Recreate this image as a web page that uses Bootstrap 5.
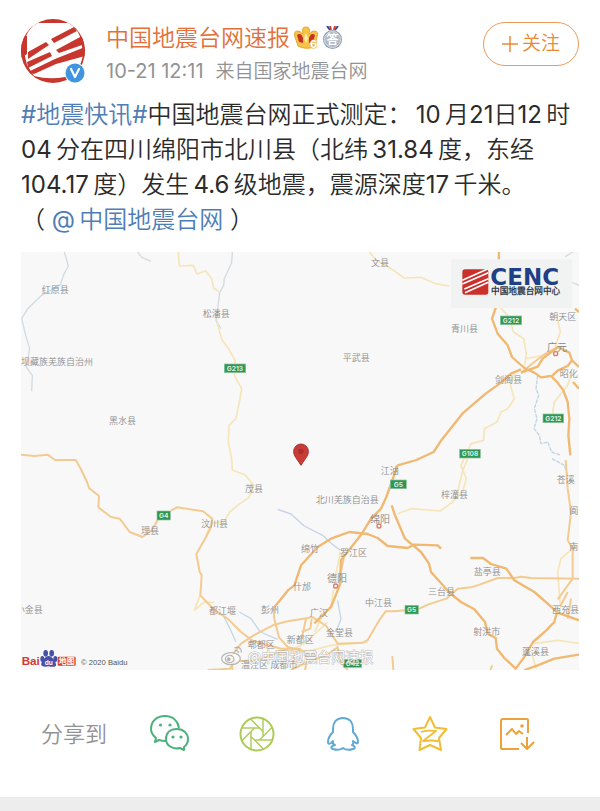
<!DOCTYPE html>
<html lang="zh-CN">
<head>
<meta charset="utf-8">
<meta name="viewport" content="width=device-width, initial-scale=1">
<title>中国地震台网速报</title>
<link href="https://cdn.jsdelivr.net/npm/bootstrap@5.3.0/dist/css/bootstrap.min.css" rel="stylesheet">
<style>
body{font-family:Inter,"Noto Sans CJK SC DemiLight","Noto Sans CJK SC",sans-serif;font-weight:400;color:#2b2b2b;background:#fff}
.post{padding:18px 21px 0}
.avatar{width:64px;height:66px}
.identity{padding:3px 0 0 21px}
.author{font-size:23px;line-height:34px;color:#e2703a}
.meta{font-size:19px;line-height:32px;color:#929292}
.meta time{font-size:20px}
.follow{width:96px;height:44px;border:1px solid #eb9a5c;border-radius:22px;background:#fff;color:#e88a35;font-size:19px;line-height:24px;margin-top:4px}
.message{font-size:24px;line-height:35px;margin:9px 0 15px}
.message a{color:#4f7db5}
.map-view{background:#f8f8f8}
.map-view svg{width:100%;height:auto}
.share{padding:40px 40px 39px 41px}
.share-label{width:86px;font-size:22px;color:#929292}
.divider{min-height:14px;background:#ededed}
.place{font-size:27px;fill:#8d8d8d;font-weight:400}
.city{font-size:30px;fill:#858585;font-weight:400}
.sign{font-size:20px;fill:#d9efdf;font-weight:700}
</style>
<script src="https://cdn.jsdelivr.net/npm/bootstrap@5.3.0/dist/js/bootstrap.bundle.min.js"></script>
</head>
<body class="d-flex flex-column min-vh-100">
<main class="post">
  <header class="d-flex align-items-start">
    <a href="#" class="flex-shrink-0 lh-1" aria-label="中国地震台网速报">
      <svg class="avatar" viewBox="0 0 64 66">
        <defs><clipPath id="face"><circle cx="32" cy="33" r="32"/></clipPath></defs>
        <g clip-path="url(#face)">
          <rect width="64" height="66" fill="#c8372d"/>
          <path d="M5 18Q9 9 16 5L48 5Q54 9 57 14L60 21 62 36Q60 54 44 59Q28 62 13 58L6 47 3 34Q6 32 6 35Z" fill="#fff"/>
          <path d="M0 16 6 18 6 36 0 40ZM30 21 53 9 56 13 33 25ZM7 34 25 24 28 27 7 41ZM35 32 61 18 64 26 38 35ZM6 44 29 34 31 38 7 50ZM7 54 34 41 64 29 64 38 35 46 13 56Z" fill="#c8372d"/>
        </g>
        <circle cx="54" cy="55" r="10.500" fill="#fff"/><circle cx="54" cy="55" r="9.500" fill="#3f95df"/>
        <path d="m50 51 4 8 4-8" fill="none" stroke="#fff" stroke-width="2.200" stroke-linecap="round" stroke-linejoin="round"/>
      </svg>
    </a>
    <div class="flex-grow-1 identity">
      <div class="d-flex align-items-center gap-1">
        <a href="#" class="author text-decoration-none text-nowrap">中国地震台网速报</a>
        <svg width="24" height="24" viewBox="0 0 24 24" role="img" aria-label="会员等级">
          <path d="M4 20 1 11Q-1 5 4 5Q7 5 8 8L9 7Q7 1 12 1T15 7L16 8Q17 5 20 5Q25 5 23 11L20 21Q12 24 4 20Z" fill="#f7c348" stroke="#e8a72e"/>
          <path d="M3 9Q7 6 9 12L9 17 5 16ZM21 9Q17 6 15 12L15 17 19 16Z" fill="#c73320"/><path d="M12 7 10 12 12 17 14 12Z" fill="#fff0a8"/>
          <text x="16" y="22" font-size="11" font-weight="700" fill="#fff" stroke="#e8a72e" stroke-width="1" paint-order="stroke">6</text>
        </svg>
        <svg width="21" height="24" viewBox="0 0 21 24" role="img" aria-label="问答勋章">
          <path d="M5 0 8 4M16 0 13 4" stroke="#2d4b91" stroke-width="2"/><path d="M8 0 9 4M13 0 12 4" stroke="#cc3d3d" stroke-width="2"/>
          <circle cx="10.500" cy="13.500" r="9.500" fill="#8f9cad"/><circle cx="10.500" cy="13.500" r="8" fill="#aeb9c7" stroke="#dde2e8"/>
          <text x="10.500" y="18" text-anchor="middle" font-size="12" font-weight="700" fill="#fff">答</text>
        </svg>
      </div>
      <div class="meta text-nowrap"><time>10-21 12:11</time><span class="ms-2 ps-1">来自国家地震台网</span></div>
    </div>
    <button type="button" class="follow flex-shrink-0 d-flex align-items-center justify-content-center p-0">
      <svg class="me-1" width="16" height="16" viewBox="0 0 16 16" aria-hidden="true"><path d="M0 8H16M8 0V16" stroke="currentColor" stroke-width="1.500"/></svg>关注
    </button>
  </header>

  <p class="message"><a href="#" class="text-decoration-none">#地震快讯#</a>中国地震台网正式测定：&thinsp;10&thinsp;月21日12&thinsp;时04&thinsp;分在四川绵阳市北川县（北纬&thinsp;31.84&thinsp;度，东经104.17&thinsp;度）发生&thinsp;4.6&thinsp;级地震，震源深度17&thinsp;千米。<br>（ <a href="#" class="text-decoration-none">@&thinsp;中国地震台网</a> ）</p>

  <figure class="map-view m-0">
    <svg class="d-block" viewBox="0 0 1674 1254" role="img" aria-label="震中位置地图">
      <g fill="none" stroke-width="4" stroke="#d3dae1" stroke-linejoin="round">
        <path d="M130 0 142 42 128 68 118 98 62 130 20 170 2 200 14 250 26 290 16 345 34 370 32 418M350 0 362 16 390 28"/>
        <path d="M634 0 632 32 610 80 608 100 596 122 590 170 585 205 600 230"/>
        <path d="M770 772 810 786 850 822 905 850 930 874 958 895" stroke="#c4d3e8"/>
        <path d="M655 1080 690 1100 718 1140 770 1162M609 1095 627 1130 645 1170M950 1045 954 1070 960 1100 945 1140" stroke="#c4d7e8"/>
        <path d="M1550 370 1545 410 1553 430 1540 470 1548 500 1539 530 1555 550 1560 575 1580 570 1592 600 1620 610M1593 620 1630 640 1640 670" stroke="#bed5e3" stroke-dasharray="12 3"/>
        <path d="M1633 14 1655 0M1650 90 1674 100"/>
      </g>
      <g fill="none" stroke="#f6e5b8" stroke-width="5" stroke-linejoin="round">
        <path d="M472 0 475 42 517 40 528 66 554 56 572 80 578 108 597 122"/>
        <path d="M588 210 602 262 624 292 642 325 640 370 662 410 655 450 645 500 624 520 622 570 632 620 634 655 672 668 698 700 684 736 650 760 626 780 610 808 572 815 554 850"/>
        <path d="M1045 0 1065 24 1110 50 1150 78 1200 76 1240 94 1285 102"/>
        <path d="M1436 165 1460 190 1478 240 1508 260 1516 305 1510 345M1480 365 1468 400 1480 440 1460 470 1440 480 1428 510 1390 530 1388 565 1350 575 1320 640 1336 680 1326 715 1295 750 1258 777 1170 770 1130 785M1340 620 1324 660 1310 720M1517 320 1555 312 1610 297"/>
        <path d="M1610 205 1618 240 1602 285M1650 370 1640 400 1600 450 1595 480 1610 510M1665 880 1620 920 1610 960 1618 1060M1537 1175 1610 1165 1674 1174M1545 1250 1532 1200"/>
        <path d="M537 1030 520 1075 550 1050 580 1052"/>
        <path d="M958 900 946 960 930 1060 900 1100 880 1140M760 1198 860 1198 930 1180 1040 1170M770 1210 850 1175 920 1110"/>
      </g>
      <g fill="none" stroke="#f3cb90" stroke-width="6" stroke-linejoin="round">
        <path d="M0 608 40 612 80 608 102 624 164 624 178 648 198 690 204 708 234 732 232 766 270 795 296 800 326 840 364 855 392 835 410 804"/>
        <path d="M450 776 468 766 546 778 574 800 568 830 548 868 526 906 536 960 542 970 538 1030 580 1074 620 1100 660 1140 694 1166 780 1190 840 1190"/>
        <path d="M634 1254 632 1210 660 1175 698 1150 760 1118 800 1108 862 1098 872 1094 916 1122 940 1160 950 1175 1026 1172 1040 1164 1074 1106 1094 1078 1120 1078 1190 1072 1220 1058 1276 1040 1310 1010 1350 1006 1376 998 1430 978 1480 978 1500 974 1530 978 1674 980"/>
        <path d="M757 1070 760 1102 774 1156 800 1185 850 1198 858 1225 852 1254M560 1254 627 1250 640 1228 710 1225 800 1190M810 1254 860 1230 920 1208 950 1185 958 1230 980 1254M842 1140 868 1130 872 1100M842 1160 855 1100"/>
        <path d="M1117 1254 1114 1212M1408 1254 1414 1240M1610 1042 1655 980 1655 890 1640 865 1650 780 1640 710 1634 624M1650 1040 1640 1100M1617 1065 1640 1020"/>
        <path d="M962 905 968 920 960 960 958 1000M1500 362 1540 330 1580 300 1605 290"/>
      </g>
      <g fill="none" stroke="#f0b870" stroke-width="7" stroke-linejoin="round">
        <path d="M758 1068 800 1016 820 1000 840 940 890 885 930 860 985 840 1040 846 1070 858 1100 882 1160 888 1180 878 1250 880 1260 890"/>
        <path d="M1022 846 960 925 956 1000 930 1065 880 1114M1022 846 1050 800 1080 770 1096 735 1112 690 1130 640 1186 624 1238 600 1260 566 1324 485 1394 425 1436 395 1470 365 1500 352M1112 760 1122 790 1152 860 1200 900 1224 935 1230 960 1275 1010 1290 1026 1320 1050 1360 1072 1392 1110 1400 1145 1424 1158 1428 1190 1450 1218 1484 1250 1510 1215 1536 1170 1575 1136 1600 1110 1608 1080 1580 1055 1540 1020 1480 985 1456 950 1410 936 1386 918 1348 918"/>
        <path d="M1434 0 1433 24M1425 165 1413 200 1430 245 1460 280 1473 315 1510 348 1540 362 1560 376 1590 372 1608 390 1627 415 1640 450 1645 500 1642 550 1648 610"/>
        <path d="M1500 362 1550 344 1565 320 1610 285 1645 302 1653 325 1640 342 1610 356 1590 375M1653 325 1674 345M1674 180 1662 170M1656 390 1674 410"/>
        <path d="M1510 1254 1550 1240 1600 1220 1674 1208M1610 1082 1674 1105"/>
      </g>
      <g class="place">
        <text x="62" y="124">红原县</text><text x="0" y="338">坝藏族羌族自治州</text><text x="264" y="516">黑水县</text><text x="545" y="196">松潘县</text><text x="1050" y="42">文县</text><text x="965" y="328">平武县</text><text x="1290" y="239">青川县</text><text x="1585" y="203">朝天区</text><text x="1422" y="394">剑阁县</text><text x="1616" y="376">昭化</text>
        <text x="672" y="719">茂县</text><text x="884" y="752">北川羌族自治县</text><text x="1079" y="667">江油</text><text x="1260" y="738">梓潼县</text><text x="540" y="826">汶川县</text><text x="360" y="847">理县</text><text x="840" y="901">绵竹</text><text x="957" y="911">罗江区</text><text x="816" y="1013">什邡</text><text x="564" y="1086">都江堰</text><text x="720" y="1084">彭州</text><text x="867" y="1092">广汉</text><text x="1032" y="1062">中江县</text><text x="797" y="1173">新都区</text><text x="915" y="1152">金堂县</text><text x="680" y="1187">郫都区</text><text x="660" y="1248">温江区 成都市</text><text x="1358" y="970">盐亭县</text><text x="1221" y="1029">三台县</text><text x="1357" y="1148">射洪市</text><text x="1593" y="1083">西充县</text><text x="1503" y="1208">蓬溪县</text><text x="1607" y="692">苍溪</text><text x="1645" y="787">阆</text><text x="1645" y="895">南</text><text x="-16" y="1082">小金县</text>
      </g>
      <g class="city"><text x="1578" y="298">广元</text><text x="1047" y="812">绵阳</text><text x="918" y="991">德阳</text></g>
      <g fill="#fff" stroke="#d97b68" stroke-width="4"><circle cx="1604" cy="305" r="6"/><circle cx="1074" cy="822" r="6"/><circle cx="944" cy="1002" r="6"/></g>
      <g fill="#2f9655" stroke="#8bc39b" stroke-width="2">
        <rect x="610" y="336" width="64" height="26"/><rect x="1438" y="192" width="64" height="26"/><rect x="1566" y="486" width="62" height="26"/><rect x="1316" y="592" width="62" height="26"/><rect x="1108" y="684" width="48" height="26"/><rect x="408" y="777" width="40" height="27"/><rect x="1152" y="1060" width="40" height="26"/><rect x="968" y="1222" width="54" height="24"/>
      </g>
      <g class="sign" text-anchor="middle"><text x="642" y="356">G213</text><text x="1470" y="212">G212</text><text x="1597" y="506">G212</text><text x="1347" y="612">G108</text><text x="1132" y="704">G5</text><text x="428" y="797">G4</text><text x="1172" y="1080">G5</text><text x="995" y="1241">G42</text></g>
      <path d="M840 640C826 618 818 612 818 598A22 22 0 0 1 862 598C862 612 854 618 840 640Z" fill="#c93b36" stroke="#a93531" stroke-width="3"/><circle cx="840" cy="598" r="8" fill="#a92d2a"/>

      <rect x="1290" y="22" width="364" height="146" rx="4" fill="#f0f3f2"/>
      <rect x="1324" y="52" width="78" height="76" rx="8" fill="#cb302b"/>
      <path d="M1324 85 1398 52M1324 96 1402 62M1330 111 1402 80M1332 122 1402 91" stroke="#fff" stroke-width="5"/>
      <text x="1408" y="98" font-family="DejaVu Sans, sans-serif" font-weight="700" font-size="69" fill="#1f3f86">CENC</text>
      <text x="1410" y="126" font-weight="700" font-size="26" fill="#303848">中国地震台网中心</text>

      <g font-family="Liberation Sans, sans-serif">
        <text x="2" y="1240" font-weight="700" font-size="35" fill="#d03a35">Bai</text>
        <g fill="#4650a6"><ellipse cx="74" cy="1204" rx="7" ry="10"/><ellipse cx="92" cy="1204" rx="7" ry="10"/><ellipse cx="64" cy="1221" rx="6" ry="9"/><ellipse cx="103" cy="1221" rx="6" ry="9"/><path d="M83 1212C94 1212 108 1235 105 1241Q99 1247 83 1243Q66 1247 61 1240C59 1231 72 1212 83 1212Z"/></g>
        <text x="71" y="1239" font-size="20" font-weight="700" fill="#fff">du</text>
        <text x="180" y="1239" font-size="23" fill="#555">© 2020 Baidu</text>
      </g>
      <rect x="110" y="1214" width="54" height="27" rx="3" fill="#d03a35"/><text x="113" y="1237" font-size="24" font-weight="700" fill="#fff">地图</text>

      <g fill="none" stroke="#aaa" stroke-width="4" opacity=".8">
        <ellipse cx="630" cy="1220" rx="28" ry="18" fill="#fff"/><ellipse cx="626" cy="1221" rx="13" ry="11"/><circle cx="623" cy="1222" r="4" fill="#999"/><path d="M640 1188Q660 1180 662 1202M643 1196Q652 1194 652 1203"/>
      </g>
      <text x="680" y="1229" font-size="42" fill="#fff" stroke="#aaa" stroke-width="3" paint-order="stroke" opacity=".8">@中国地震台网速报</text>
    </svg>
  </figure>
</main>

<nav class="share d-flex align-items-center" aria-label="分享">
  <span class="share-label flex-shrink-0 text-nowrap">分享到</span>
  <div class="d-flex flex-grow-1">
    <a href="#" class="d-flex justify-content-center col" aria-label="微信">
      <svg width="40" height="48" viewBox="0 0 40 48" fill="none" stroke="#4cb27c" stroke-width="2" stroke-linejoin="round"><path d="M16 31Q12 31 9 30L5 32 6 28Q1 24 1 19C1 11 7 6 15 6S28 11 29 18"/><path d="M27 19C34 19 38 24 38 29Q38 34 34 37L34 40 30 38C22 40 16 35 16 29C16 23 20 19 27 19Z"/><g fill="#4cb27c" stroke="none"><circle cx="10.500" cy="15" r="1.600"/><circle cx="20" cy="15" r="1.600"/><circle cx="23" cy="27" r="1.600"/><circle cx="31" cy="27" r="1.600"/></g></svg>
    </a>
    <a href="#" class="d-flex justify-content-center col" aria-label="朋友圈">
      <svg width="40" height="48" viewBox="0 0 40 48" fill="none" stroke="#accb56">
        <defs><path id="blade" d="M6 2.500V-15.500"/></defs>
        <g transform="translate(20 24)"><circle r="16.500" stroke-width="2"/><g stroke-width="1.400"><use href="#blade"/><use href="#blade" transform="rotate(45)"/><use href="#blade" transform="rotate(90)"/><use href="#blade" transform="rotate(135)"/><use href="#blade" transform="rotate(180)"/><use href="#blade" transform="rotate(225)"/><use href="#blade" transform="rotate(270)"/><use href="#blade" transform="rotate(315)"/></g></g>
      </svg>
    </a>
    <a href="#" class="d-flex justify-content-center col" aria-label="QQ">
      <svg width="40" height="48" viewBox="0 0 40 48" fill="none" stroke="#62a9d4" stroke-width="2" stroke-linejoin="round"><path d="M20 8C13 8 10 13 10 19L10 22Q5 27 5 32Q5 35 8 33L10 31Q9 34 12 35C8 36 7 38 10 39Q16 41 20 38Q24 41 30 39C33 38 32 36 29 35Q31 34 30 31L33 33Q35 34 35 32Q35 27 30 22L30 19C30 13 27 8 20 8Z"/></svg>
    </a>
    <a href="#" class="d-flex justify-content-center col" aria-label="QQ空间">
      <svg width="40" height="48" viewBox="0 0 40 48" fill="none" stroke="#f1bd37" stroke-width="2" stroke-linejoin="round"><path d="M20 7 25 17.500 36.500 19 29 28 31 40 20 35 9.500 40 11 28 3.500 19 15 17.500Z"/><path d="M11 22Q18 20 26 21L13 31Q21 30 29 31" stroke-width="1.800"/></svg>
    </a>
    <a href="#" class="d-flex justify-content-center col" aria-label="保存图片">
      <svg width="40" height="48" viewBox="0 0 40 48" fill="none" stroke="#eca13d" stroke-width="2" stroke-linejoin="round"><path d="M31 23V10Q31 9 30 9H6Q4 9 4 11V38Q4 39 6 39H22M9 25 15 19 19 24 22 21 26 24"/><circle cx="25" cy="16" r="1.800" fill="#eca13d" stroke="none"/><path d="M30 27V39M24 33 30 39 37 32"/></svg>
    </a>
  </div>
</nav>
<footer class="divider flex-grow-1"></footer>
</body>
</html>
